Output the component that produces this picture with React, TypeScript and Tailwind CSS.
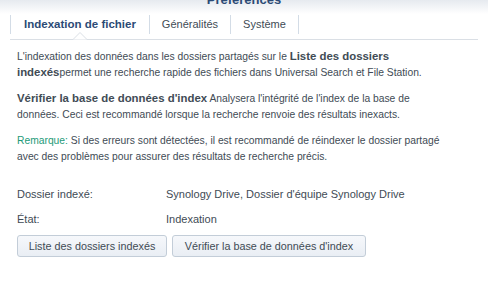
import React from 'react';

const tabs = [
  { label: 'Indexation de fichier', width: 'w-[140px] border-l' },
  { label: 'Généralités', width: 'w-[81px]' },
  { label: 'Système', width: 'w-[68px]' },
];

export default function App() {
  return (
    <div
      className="w-[488px] h-[305px] bg-white overflow-hidden text-[11px] text-[#414b55]"
      style={{ fontFamily: '"Liberation Sans", Arial, sans-serif' }}
    >
      {/* window header, title partly scrolled off */}
      <div className="h-[14px] bg-gradient-to-b from-[#e6eaef] to-white flex justify-center">
        <div className="-mt-[8px] text-[13px] font-bold text-[#2b4a75] leading-[16px]">Préférences</div>
      </div>

      {/* tab bar */}
      <div className="relative mx-[10px] h-[26px] border-b border-[#dadfe5] flex">
        {tabs.map((t, i) => (
          <div
            key={t.label}
            className={`flex items-center justify-center h-[19px] mt-[1px] border-r border-[#d3dce6] ${t.width} ${
              i === 0 ? 'font-bold text-[11.5px] text-[#2b4a75]' : 'text-[#414b55]'
            }`}
          >
            {t.label}
          </div>
        ))}
        <svg className="absolute left-[63px] -bottom-[1px]" width="14" height="8" viewBox="0 0 14 8">
          <path d="M0 7.5 L7 0.5 L14 7.5" fill="white" stroke="#dadfe5" />
        </svg>
      </div>

      <div className="px-[17px] pt-[9px] w-[477px]">
        <div className="text-[10.3px] leading-[16px]">
          <p>
            L'indexation des données dans les dossiers partagés sur le{' '}
            <b className="text-[11.4px] leading-[12px]">Liste des dossiers indexés</b>permet une recherche rapide des
            fichiers dans Universal Search et File Station.
          </p>
          <p className="mt-[10px] pr-[15px]">
            <b className="text-[11.4px] leading-[12px]">Vérifier la base de données d'index</b> Analysera l'intégrité
            de l'index de la base de données. Ceci est recommandé lorsque la recherche renvoie des résultats inexacts.
          </p>
          <p className="mt-[10px]">
            <span className="text-[#1d9a78]">Remarque:</span> Si des erreurs sont détectées, il est recommandé de
            réindexer le dossier partagé avec des problèmes pour assurer des résultats de recherche précis.
          </p>
        </div>

        <div className="mt-[21px] grid grid-cols-[149px_1fr] gap-y-[9px] leading-[16px]">
          <div>Dossier indexé:</div>
          <div>Synology Drive, Dossier d'équipe Synology Drive</div>
          <div>État:</div>
          <div>Indexation</div>
        </div>

        <div className="mt-[8px] flex gap-[5px]">
          <button className="w-[150px] h-[22px] rounded-[3px] border border-[#c3cdd8] bg-gradient-to-b from-[#f6f8fb] to-[#e9eef4] text-[#414b55] text-[10.8px]">
            Liste des dossiers indexés
          </button>
          <button className="w-[194px] h-[22px] rounded-[3px] border border-[#c3cdd8] bg-gradient-to-b from-[#f6f8fb] to-[#e9eef4] text-[#414b55] text-[10.8px]">
            Vérifier la base de données d'index
          </button>
        </div>
      </div>
    </div>
  );
}
